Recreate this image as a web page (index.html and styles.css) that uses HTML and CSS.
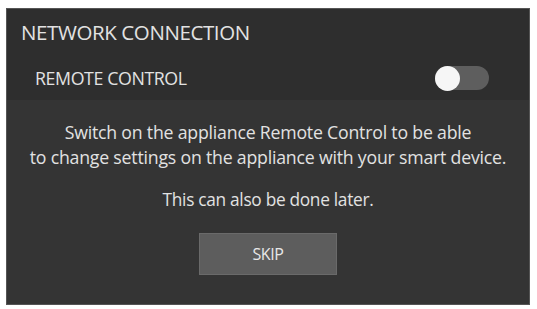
FILE: index.html
```html
<!DOCTYPE html>
<html>
<head>
<meta charset="utf-8">
<link rel="stylesheet" href="styles.css">
</head>
<body>
<div class="panel">
  <div class="header">
    <div class="title">NETWORK CONNECTION</div>
    <div class="row">
      <span class="label">REMOTE CONTROL</span>
      <span class="toggle"><span class="knob"></span></span>
    </div>
  </div>
  <div class="content">
    <p class="msg">Switch on the appliance Remote Control to be able<br>to change settings on the appliance with your smart device.</p>
    <p class="later">This can also be done later.</p>
    <button class="skip">SKIP</button>
  </div>
</div>
</body>
</html>
```
FILE: styles.css
```css
html, body {
  margin: 0;
  padding: 0;
  background: #ffffff;
}
body {
  padding: 8px 7px 4px 6px;
  font-family: "Open Sans", "Noto Sans", sans-serif;
  color: #e2e2e2;
}
.panel {
  width: 524px;
  height: 297px;
  box-sizing: border-box;
  background: #343434;
  border: 1px solid #555;
  display: flex;
  flex-direction: column;
}
.header {
  background: #2e2e2e;
  height: 91px;
  padding: 12px 0 0 14px;
  box-sizing: border-box;
}
.title {
  font-size: 20.5px;
  line-height: 22px;
  letter-spacing: -0.4px;
}
.row {
  display: flex;
  align-items: center;
  justify-content: space-between;
  margin-top: 23px;
  padding: 0 40px 0 14px;
}
.label {
  font-size: 17.8px;
  letter-spacing: -0.4px;
}
.toggle {
  width: 54px;
  height: 24px;
  border-radius: 12px;
  background: #5e5e5e;
  display: flex;
  align-items: center;
}
.knob {
  width: 25px;
  height: 25px;
  border-radius: 50%;
  background: #f6f6f6;
}
.content {
  flex: 1;
  display: flex;
  flex-direction: column;
  align-items: center;
  text-align: center;
  padding-top: 20px;
}
.msg {
  margin: 0;
  font-size: 17.7px;
  line-height: 25px;
  letter-spacing: -0.2px;
  white-space: nowrap;
}
.later {
  margin: 19px 0 0;
  font-size: 17.3px;
  line-height: 22px;
  letter-spacing: -0.3px;
}
.skip {
  margin-top: 22px;
  width: 138px;
  height: 42px;
  background: #5d5d5d;
  border: 1px solid #6a6a6a;
  color: #e8e8e8;
  font-family: "Open Sans", "Noto Sans", sans-serif;
  font-size: 16px;
  letter-spacing: -0.4px;
}
```
